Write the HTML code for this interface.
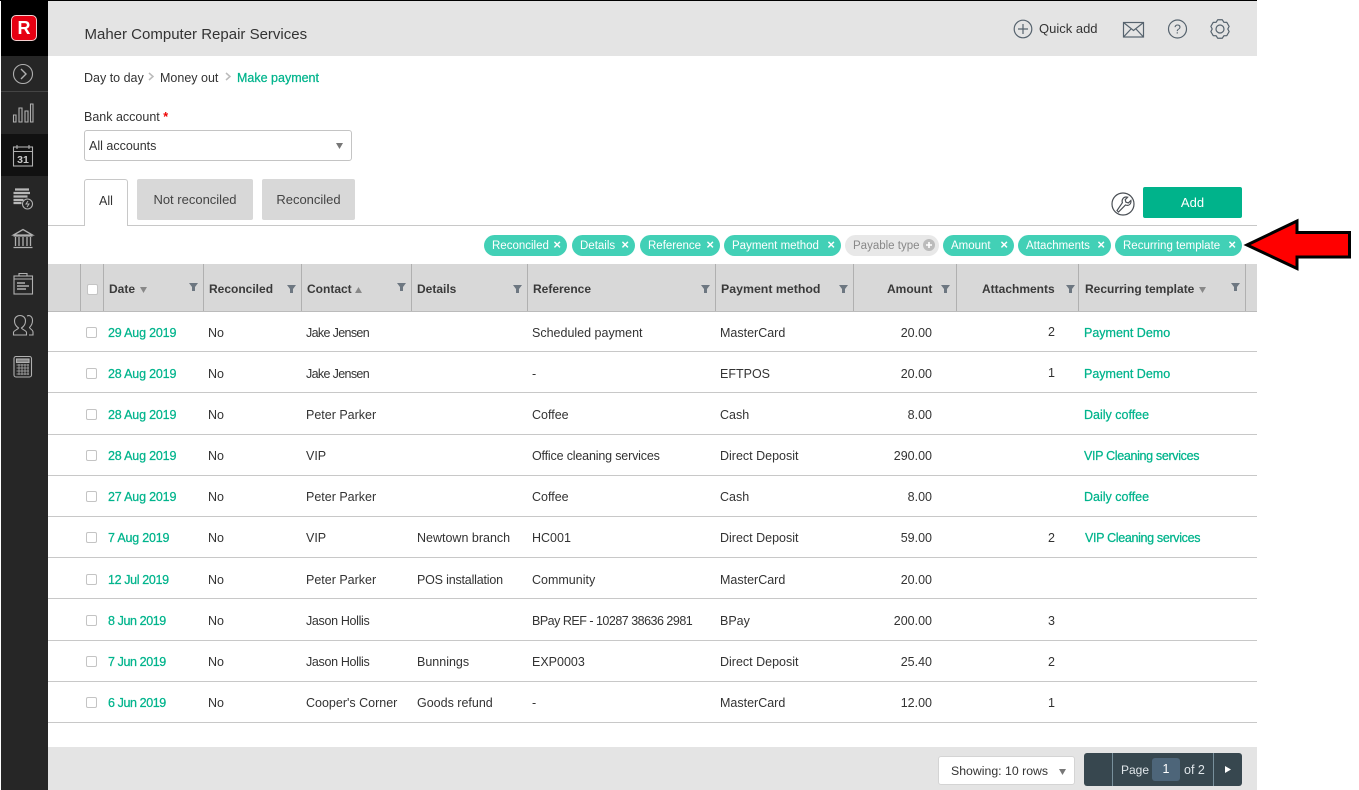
<!DOCTYPE html>
<html><head><meta charset="utf-8"><style>
*{box-sizing:border-box}
html,body{margin:0;padding:0;width:1359px;height:790px;overflow:hidden;background:#fff}
body{font-family:"Liberation Sans",sans-serif;font-size:12.5px;color:#333;position:relative}
.a,.t,.l,.p,.v{position:absolute}
.t{line-height:16px;white-space:nowrap;height:16px}
.g{color:#00b48c;-webkit-text-stroke:.25px #00b48c}
.h{font-weight:bold;color:#3a3a3a;font-size:12px}
.r{text-align:right}
.l{left:48px;width:1209px;height:1px;background:#c8c8c8}
.v{top:264px;width:1px;height:47px;background:#b0b0b0}
.p{top:235px;height:21px;border-radius:11px;background:#42d0b6;color:#fff;font-size:11.5px;line-height:22px;padding-left:8px;white-space:nowrap}
.p b{position:absolute;right:6px;top:0;font-size:13px;line-height:20px}
.cb{position:absolute;left:86px;width:11px;height:11px;border:1.5px solid #c4c4c4;border-radius:2px;background:#fff}
.tab{position:absolute;top:179px;height:41px;background:#d8d8d8;border-radius:2px;line-height:42px;text-align:center;font-size:13px;color:#444}
.aug{letter-spacing:-.18px}.jun{letter-spacing:-.4px}.jk{letter-spacing:-.65px}.js{letter-spacing:-.33px}.vc{letter-spacing:-.33px}
svg{position:absolute;overflow:visible}
</style></head><body>
<div class="a" style="left:0;top:0;width:1257px;height:1px;background:#000"></div>
<div class="a" style="left:1px;top:0;width:47px;height:790px;background:#262626"></div>
<div class="a" style="left:1px;top:0;width:47px;height:56px;background:#000"></div>
<div class="a" style="left:1px;top:91px;width:47px;height:1px;background:#444"></div>
<div class="a" style="left:1px;top:134px;width:47px;height:42px;background:#111"></div>
<div class="a" style="left:48px;top:1px;width:1209px;height:55px;background:#e4e4e4"></div>
<div class="a" style="left:11px;top:15px;width:26px;height:26px;background:#e60012;border-radius:5px;border:1px solid #f5d0d0;color:#fff;font-weight:bold;font-size:18px;line-height:24px;text-align:center">R</div>
<svg width="48" height="390" style="left:0;top:0" fill="none" stroke="#b0b0b0" stroke-width="1.1">
<circle cx="23" cy="74" r="9.5"/><path d="M21 69l5 5-5 5" stroke-width="1.4"/>
<path d="M13.500 115h2.500v7h-2.500zM19 108h3v14h-3zM25 111h3v11h-3zM30.500 104h2.500v18h-2.500z"/>
<rect x="13.500" y="147" width="19" height="19"/><path d="M13.500 151.500h19M17 145v4M29 145v4"/>
<text x="23" y="163" fill="#c8c8c8" stroke="none" font-family="Liberation Sans" font-weight="bold" font-size="10.500" text-anchor="middle">31</text>
<path d="M15 189.500h14M13.500 193h16.500M13.500 196.500h14M13.500 200h10M13.500 203h8" stroke="#b8b8b8" stroke-width="2.200"/><circle cx="27.500" cy="204" r="5" fill="#262626"/><path d="M28 201l-2 3h3l-2 3" stroke-width="1"/>
<path d="M13.500 235l9.500-5.500 9.500 5.500zM13.500 236h19M15.500 237v9M19 237v9M23 237v9M27 237v9M30.500 237v9M13.500 247.500h19" stroke-width="1.300"/>
<rect x="14" y="276" width="18.500" height="18"/><path d="M14 279h18.500M19 276v-2.500h8v2.500"/><path d="M17 283h8M17 286h12M17 289h9" stroke-width="1.500"/>
<path d="M13.500 335v-2.500c0-2 4.500-3 5-4.500-3-2-4-4-4-7 0-3.500 2.500-5.500 5.500-5.500s5.500 2 5.500 5.500c0 3-1 5-4 7 .5 1.500 5 2.500 5 4.500v2.500z"/><path d="M27 316c3-1.500 5.500 1 5.500 4.500 0 3-1 5-3 7 .5 1.500 3.500 2.500 3.500 4.500v3h-4"/>
<rect x="14" y="356.500" width="17.500" height="20.500" rx="2"/><rect x="16.500" y="359" width="12.500" height="3.500" fill="#888"/><path d="M16.500 365h12.500M16.500 368h12.500M16.500 371h12.500M16.500 374h12.500M19 364v11M22 364v11M25 364v11M28 364v11" stroke-width=".8"/>
</svg>

<div class="t" style="left:84.500px;top:26px;font-size:15px;color:#333;line-height:16px;margin-top:1px">Maher Computer Repair Services</div>
<div class="t" style="left:1039px;top:21px;font-size:13px">Quick add</div>
<svg width="240" height="45" style="left:1000px;top:10px" fill="none" stroke="#56636e" stroke-width="1.200">
<circle cx="23" cy="19" r="8.800"/><path d="M23 14v10M18 19h10"/>
<rect x="123.500" y="12.500" width="20" height="14.500"/><path d="M123.500 12.500l10 8 10-8M123.500 27l7.500-8M143.500 27l-7.500-8"/>
<circle cx="177.500" cy="19" r="9"/>
<text x="177.500" y="23.500" fill="#56636e" stroke="none" font-family="Liberation Sans" font-size="12.500" text-anchor="middle">?</text>
<circle cx="220" cy="19" r="4"/><path stroke-linejoin="round" d="M216.100 12.250L217.700 9.780H222.300L223.900 12.250L226.830 12.400L229.130 16.380L227.800 19L229.130 21.620L226.830 25.600L223.900 25.750L222.300 28.220H217.700L216.100 25.750L213.170 25.600L210.870 21.620L212.200 19L210.870 16.380L213.170 12.400Z"/>
</svg>

<div class="t" style="left:84px;top:70px">Day to day</div>
<svg width="8" height="10" style="left:148px;top:72px" fill="none" stroke="#bbb" stroke-width="1.500"><path d="M1 1l4 3.500-4 3.500"/></svg>
<div class="t" style="left:160px;top:70px">Money out</div>
<svg width="8" height="10" style="left:225px;top:72px" fill="none" stroke="#bbb" stroke-width="1.500"><path d="M1 1l4 3.500-4 3.500"/></svg>
<div class="t g" style="left:237px;top:70px">Make payment</div>
<div class="t" style="left:84px;top:109px">Bank account <span style="color:#e00;font-weight:bold">*</span></div>
<div class="a" style="left:84px;top:130px;width:268px;height:31px;border:1px solid #c4c4c4;border-radius:3px;padding-left:4px;line-height:30px">All accounts</div>
<svg width="8" height="7" style="left:336px;top:143px"><path d="M0 0h7l-3.500 6z" fill="#777"/></svg>

<div class="l" style="top:225px"></div>
<div class="a" style="left:84px;top:179px;width:44px;height:47px;background:#fff;border:1px solid #c8c8c8;border-bottom:0;border-radius:3px 3px 0 0;text-align:center;line-height:42px">All</div>
<div class="tab" style="left:137px;width:116px">Not reconciled</div>
<div class="tab" style="left:262px;width:93px">Reconciled</div>
<svg width="26" height="26" style="left:1110px;top:191px" fill="none" stroke="#4a4f55" stroke-width="1.200"><circle cx="13" cy="13" r="11"/><path d="M7 19.500l1.500 1.500 7-7c2 .8 4 .2 5-1.500.6-1 .6-2 .4-3l-2.500 2.400-2.500-.7-.7-2.500 2.400-2.500c-2-.5-4 .2-5 2-.6 1-.6 2.300-.2 3.500z"/></svg>
<div class="a" style="left:1143px;top:187px;width:99px;height:31px;background:#00b38b;border-radius:2px;color:#fff;text-align:center;line-height:31px;font-size:13px">Add</div>

<div class="p" style="left:484px;width:83px">Reconciled<b>×</b></div>
<div class="p" style="left:572px;width:63px">Details<b>×</b></div>
<div class="p" style="left:640px;width:80px">Reference<b>×</b></div>
<div class="p" style="left:724px;width:117px">Payment method<b>×</b></div>
<div class="p" style="left:845px;width:94px;background:#e8e8e8;color:#888">Payable type<svg width="12" height="12" style="right:4px;top:4px;left:auto"><circle cx="6" cy="6" r="6" fill="#bbb"/><path d="M6 3v6M3 6h6" stroke="#fff" stroke-width="1.600"/></svg></div>
<div class="p" style="left:943px;width:71px">Amount<b>×</b></div>
<div class="p" style="left:1018px;width:93px">Attachments<b>×</b></div>
<div class="p" style="left:1115px;width:127px">Recurring template<b>×</b></div>
<svg width="1359" height="60" style="left:0;top:215px"><path d="M1247 30L1297 6V17.500H1349.500V42H1297V53.500Z" fill="#f00" stroke="#000" stroke-width="3"/></svg>

<div class="a" style="left:48px;top:264px;width:1209px;height:47px;background:#d8d8d8"></div>
<div class="l" style="top:311px;background:#bbb"></div>
<div class="v" style="left:80px"></div><div class="v" style="left:103px"></div><div class="v" style="left:203px"></div><div class="v" style="left:301px"></div><div class="v" style="left:411px"></div><div class="v" style="left:527px"></div><div class="v" style="left:715px"></div><div class="v" style="left:853px"></div><div class="v" style="left:956px"></div><div class="v" style="left:1078px"></div><div class="v" style="left:1245px"></div>
<div class="cb" style="left:87px;top:284px;border-radius:2px"></div>
<div class="t h" style="left:109px;top:281px">Date</div>
<div class="t h" style="left:209px;top:281px">Reconciled</div>
<div class="t h" style="left:307px;top:281px">Contact</div>
<div class="t h" style="left:417px;top:281px">Details</div>
<div class="t h" style="left:533px;top:281px">Reference</div>
<div class="t h" style="left:721px;top:281px;font-size:12.350px">Payment method</div>
<div class="t h" style="left:887px;top:281px">Amount</div>
<div class="t h" style="left:982px;top:281px">Attachments</div>
<div class="t h" style="left:1085px;top:281px">Recurring template</div>
<svg width="1359" height="30" style="left:0;top:275px" fill="#6d7781">
<path d="M140 12h7l-3.500 6zM1199 12h7l-3.500 6zM355 18h7l-3.500-6z" fill="#888"/>
<path d="M189 8h9l-3 4v4h-3v-4z"/><path d="M287 10h9l-3 4v4h-3v-4z"/><path d="M397 8h9l-3 4v4h-3v-4z"/><path d="M513 10h9l-3 4v4h-3v-4z"/><path d="M701 10h9l-3 4v4h-3v-4z"/><path d="M839 10h9l-3 4v4h-3v-4z"/><path d="M941 10h9l-3 4v4h-3v-4z"/><path d="M1066 10h9l-3 4v4h-3v-4z"/><path d="M1231 8h9l-3 4v4h-3v-4z"/>
</svg>

<div class="l" style="top:351px"></div><div class="l" style="top:392px"></div><div class="l" style="top:434px"></div><div class="l" style="top:475px"></div><div class="l" style="top:516px"></div><div class="l" style="top:557px"></div><div class="l" style="top:598px"></div><div class="l" style="top:640px"></div><div class="l" style="top:681px"></div><div class="l" style="top:722px"></div>

<div class="cb" style="top:327px"></div><div class="cb" style="top:368px"></div><div class="cb" style="top:409px"></div><div class="cb" style="top:450px"></div><div class="cb" style="top:491px"></div><div class="cb" style="top:532px"></div><div class="cb" style="top:574px"></div><div class="cb" style="top:615px"></div><div class="cb" style="top:656px"></div><div class="cb" style="top:697px"></div>

<div class="t g aug" style="left:108px;top:325px">29 Aug 2019</div><div class="t" style="left:208px;top:325px">No</div><div class="t jk" style="left:306px;top:325px">Jake Jensen</div><div class="t" style="left:532px;top:325px">Scheduled payment</div><div class="t" style="left:720px;top:325px">MasterCard</div><div class="t r" style="left:832px;width:100px;top:325px">20.00</div><div class="t r" style="left:1005px;width:50px;top:324px">2</div><div class="t g" style="left:1084px;top:325px">Payment Demo</div>
<div class="t g aug" style="left:108px;top:366px">28 Aug 2019</div><div class="t" style="left:208px;top:366px">No</div><div class="t jk" style="left:306px;top:366px">Jake Jensen</div><div class="t" style="left:532px;top:366px">-</div><div class="t" style="left:720px;top:366px">EFTPOS</div><div class="t r" style="left:832px;width:100px;top:366px">20.00</div><div class="t r" style="left:1005px;width:50px;top:365px">1</div><div class="t g" style="left:1084px;top:366px">Payment Demo</div>
<div class="t g aug" style="left:108px;top:407px">28 Aug 2019</div><div class="t" style="left:208px;top:407px">No</div><div class="t" style="left:306px;top:407px">Peter Parker</div><div class="t" style="left:532px;top:407px">Coffee</div><div class="t" style="left:720px;top:407px">Cash</div><div class="t r" style="left:832px;width:100px;top:407px">8.00</div><div class="t g" style="left:1084px;top:407px">Daily coffee</div>
<div class="t g aug" style="left:108px;top:448px">28 Aug 2019</div><div class="t" style="left:208px;top:448px">No</div><div class="t" style="left:306px;top:448px">VIP</div><div class="t" style="left:532px;top:448px;letter-spacing:-.17px">Office cleaning services</div><div class="t" style="left:720px;top:448px">Direct Deposit</div><div class="t r" style="left:832px;width:100px;top:448px">290.00</div><div class="t g vc" style="left:1084px;top:448px">VIP Cleaning services</div>
<div class="t g aug" style="left:108px;top:489px">27 Aug 2019</div><div class="t" style="left:208px;top:489px">No</div><div class="t" style="left:306px;top:489px">Peter Parker</div><div class="t" style="left:532px;top:489px">Coffee</div><div class="t" style="left:720px;top:489px">Cash</div><div class="t r" style="left:832px;width:100px;top:489px">8.00</div><div class="t g" style="left:1084px;top:489px">Daily coffee</div>
<div class="t g" style="left:108px;top:530px;letter-spacing:-.2px">7 Aug 2019</div><div class="t" style="left:208px;top:530px">No</div><div class="t" style="left:306px;top:530px">VIP</div><div class="t" style="left:417px;top:530px">Newtown branch</div><div class="t" style="left:532px;top:530px">HC001</div><div class="t" style="left:720px;top:530px">Direct Deposit</div><div class="t r" style="left:832px;width:100px;top:530px">59.00</div><div class="t r" style="left:1005px;width:50px;top:530px">2</div><div class="t g vc" style="left:1085px;top:530px">VIP Cleaning services</div>
<div class="t g" style="left:108px;top:572px;letter-spacing:-.36px">12 Jul 2019</div><div class="t" style="left:208px;top:572px">No</div><div class="t" style="left:306px;top:572px">Peter Parker</div><div class="t" style="left:417px;top:572px;letter-spacing:-.19px">POS installation</div><div class="t" style="left:532px;top:572px">Community</div><div class="t" style="left:720px;top:572px">MasterCard</div><div class="t r" style="left:832px;width:100px;top:572px">20.00</div>
<div class="t g jun" style="left:108px;top:613px">8 Jun 2019</div><div class="t" style="left:208px;top:613px">No</div><div class="t js" style="left:306px;top:613px">Jason Hollis</div><div class="t" style="left:532px;top:613px;letter-spacing:-.5px">BPay REF - 10287 38636 2981</div><div class="t" style="left:720px;top:613px">BPay</div><div class="t r" style="left:832px;width:100px;top:613px">200.00</div><div class="t r" style="left:1005px;width:50px;top:613px">3</div>
<div class="t g jun" style="left:108px;top:654px">7 Jun 2019</div><div class="t" style="left:208px;top:654px">No</div><div class="t js" style="left:306px;top:654px">Jason Hollis</div><div class="t" style="left:417px;top:654px">Bunnings</div><div class="t" style="left:532px;top:654px">EXP0003</div><div class="t" style="left:720px;top:654px">Direct Deposit</div><div class="t r" style="left:832px;width:100px;top:654px">25.40</div><div class="t r" style="left:1005px;width:50px;top:654px">2</div>
<div class="t g jun" style="left:108px;top:695px">6 Jun 2019</div><div class="t" style="left:208px;top:695px">No</div><div class="t" style="left:306px;top:695px">Cooper's Corner</div><div class="t" style="left:417px;top:695px">Goods refund</div><div class="t" style="left:532px;top:695px">-</div><div class="t" style="left:720px;top:695px">MasterCard</div><div class="t r" style="left:832px;width:100px;top:695px">12.00</div><div class="t r" style="left:1005px;width:50px;top:695px">1</div>

<div class="a" style="left:48px;top:747px;width:1209px;height:43px;background:#e4e4e4"></div>
<div class="a" style="left:938px;top:756px;width:137px;height:29px;background:#fff;border:1px solid #d4d4d4;border-radius:3px;padding-left:12px;line-height:28px;font-size:12.300px">Showing: 10 rows</div>
<svg width="8" height="7" style="left:1059px;top:769px"><path d="M0 0h7l-3.500 6z" fill="#777"/></svg>
<div class="a" style="left:1084px;top:753px;width:158px;height:33px;background:#37474f;border-radius:3px"></div>
<div class="a" style="left:1112px;top:753px;width:1px;height:33px;background:#78909c"></div>
<div class="a" style="left:1213px;top:753px;width:1px;height:33px;background:#78909c"></div>
<div class="t" style="left:1121px;top:762px;color:#e0e6ea;font-size:12px">Page</div>
<div class="a" style="left:1152px;top:758px;width:28px;height:23px;background:#4d6579;border-radius:3px;color:#fff;text-align:center;line-height:23px">1</div>
<div class="t" style="left:1184px;top:762px;color:#e0e6ea">of 2</div>
<svg width="8" height="8" style="left:1225px;top:766px"><path d="M0 0l6 3.500L0 7z" fill="#fff"/></svg>
</body></html>
